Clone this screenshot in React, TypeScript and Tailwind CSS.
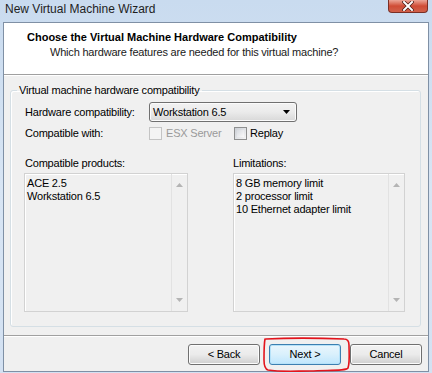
import React from "react";

function ScrollList({ items, width }: { items: string[]; width: string }) {
  return (
    <div className={`${width} h-[139px] mt-[3px] border border-[#d2d2d2] shadow-[inset_1px_1px_0_#ffffff] bg-[#f0f0f0] flex`}>
      <div className="flex-1 pl-[2px] pt-[3px] leading-[13px]">
        {items.map((it) => (
          <div key={it}>{it}</div>
        ))}
      </div>
      <div className="w-[16px] border-l border-[#e2e2e2] flex flex-col items-center justify-between py-[9px]">
        <svg width="7" height="4" viewBox="0 0 7 4">
          <path d="M0 4 L3.5 0 L7 4 Z" fill="#b4b4b4" />
        </svg>
        <svg width="7" height="4" viewBox="0 0 7 4">
          <path d="M0 0 L3.5 4 L7 0 Z" fill="#b4b4b4" />
        </svg>
      </div>
    </div>
  );
}

function WinButton({ label, main }: { label: string; main?: boolean }) {
  return (
    <button
      className={`w-[72px] h-[21px] rounded-[3px] border text-[11px] leading-none tracking-[-0.2px] ${
        main
          ? "border-[#3c7fb1] shadow-[inset_0_0_0_1px_#b6e2f9] bg-gradient-to-b from-[#eaf6fd] via-[#d9f0fc] to-[#bee6fd]"
          : "border-[#707070] shadow-[inset_0_0_0_1px_#fcfcfc] bg-gradient-to-b from-[#f2f2f2] via-[#ebebeb] to-[#cfcfcf]"
      }`}
    >
      {label}
    </button>
  );
}

export default function App() {
  return (
    <div className="w-[432px] h-[373px] relative overflow-hidden bg-gradient-to-b from-[#c9dbef] via-[#d8e5f4] to-[#d3e1f2] font-['Liberation_Sans',Arial,sans-serif] text-[11px] tracking-[-0.2px] text-black">
      {/* title bar */}
      <div className="h-[22px] flex items-start justify-between">
        <span className="pl-[5px] pt-[2px] text-[12px] leading-[15px] tracking-normal text-[#1e1e1e]">
          New Virtual Machine Wizard
        </span>
        <div className="mr-[4px] w-[40px] h-[13px] rounded-b-[4px] border border-t-0 border-[#7a2f25] bg-gradient-to-b from-[#eba597] via-[#cf4b35] to-[#d1614a] flex items-center justify-center">
          <svg width="12" height="10" viewBox="0 0 12 10">
            <path d="M2 1 L10 9 M10 1 L2 9" stroke="#4a1a14" strokeWidth="3.4" strokeLinecap="square" />
            <path d="M2 1 L10 9 M10 1 L2 9" stroke="#ffffff" strokeWidth="2" strokeLinecap="square" />
          </svg>
        </div>
      </div>

      {/* client area */}
      <div className="ml-[3px] w-[426px] h-[350px] border border-[#7f90a5] bg-[#f0f0f0] flex flex-col">
        <div className="h-[51px] bg-white flex flex-col">
          <div className="pl-[23px] pt-[8px] font-bold leading-[13px] tracking-normal">
            Choose the Virtual Machine Hardware Compatibility
          </div>
          <div className="pl-[46px] pt-[2px] leading-[13px] text-[#1a1a1a]">
            Which hardware features are needed for this virtual machine?
          </div>
        </div>
        <div className="h-[1px] bg-[#a0a0a0]" />
        <div className="h-[1px] bg-white" />

        <fieldset className="ml-[6px] mt-[8px] w-[411px] h-[243px] border border-[#d5dfe5] rounded-[3px] shadow-[inset_1px_1px_0_#ffffff]">
          <legend className="ml-[6px] px-[2px] leading-[13px]">Virtual machine hardware compatibility</legend>
          <div className="flex flex-col pl-[14px]">
            <div className="flex items-center mt-[5px]">
              <span className="w-[124px]">Hardware compatibility:</span>
              <div className="w-[148px] h-[20px] rounded-[3px] border border-[#707070] shadow-[inset_0_0_0_1px_#fbfbfb] bg-gradient-to-b from-[#f2f2f2] via-[#ebebeb] to-[#d8d8d8] flex items-center justify-between pl-[3px] pr-[6px]">
                <span>Workstation 6.5</span>
                <svg width="7" height="4" viewBox="0 0 7 4">
                  <path d="M0 0 L3.5 4 L7 0 Z" fill="#000" />
                </svg>
              </div>
            </div>
            <div className="flex items-center mt-[5px] h-[13px]">
              <span className="w-[124px]">Compatible with:</span>
              <div className="w-[13px] h-[13px] border border-[#c4c4c4] bg-[#f4f4f4]" />
              <span className="ml-[4px] w-[68px] text-[#9a9a9a]">ESX Server</span>
              <div className="w-[13px] h-[13px] border border-[#8e8f8f] bg-gradient-to-br from-[#cbcfd5] to-[#f6f6f6] p-[2px]">
                <div className="w-full h-full bg-gradient-to-br from-[#d8dbe0] to-[#fafafa]" />
              </div>
              <span className="ml-[3px]">Replay</span>
            </div>
            <div className="flex mt-[17px]">
              <div className="w-[208px] flex flex-col">
                <span className="leading-[13px]">Compatible products:</span>
                <ScrollList items={["ACE 2.5", "Workstation 6.5"]} width="w-[164px] -ml-[1px]" />
              </div>
              <div className="flex flex-col">
                <span className="leading-[13px]">Limitations:</span>
                <ScrollList
                  items={["8 GB memory limit", "2 processor limit", "10 Ethernet adapter limit"]}
                  width="w-[172px]"
                />
              </div>
            </div>
          </div>
        </fieldset>

        <div className="mt-[8px] h-[1px] bg-[#a0a0a0]" />
        <div className="h-[1px] bg-white" />

        <div className="mt-[7px] flex justify-end gap-[9px] pr-[6px]">
          <WinButton label="< Back" />
          <WinButton label="Next >" main />
          <WinButton label="Cancel" />
        </div>
      </div>

      {/* hand-drawn red mark around Next */}
      <svg className="absolute left-0 top-0 pointer-events-none" width="432" height="373" viewBox="0 0 432 373">
        <path
          d="M266 339 C285 338 320 338 344 339 C348 339 349 341 349 345 C349 352 350 362 348 368 C346 371 330 370 310 371 C295 371 280 372 268 370 C265 369 264 366 264 360 C264 352 264 344 265 339"
          fill="none"
          stroke="#e3141c"
          strokeWidth="1.6"
          strokeLinecap="round"
        />
      </svg>
    </div>
  );
}
